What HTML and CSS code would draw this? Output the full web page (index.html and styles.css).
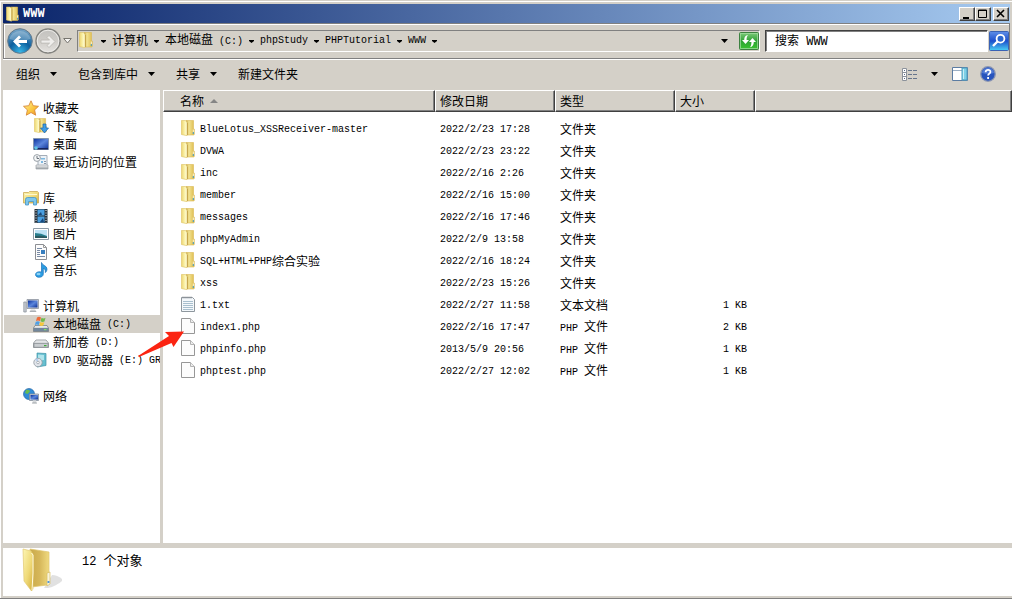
FILE: index.html
```html
<!DOCTYPE html>
<html lang="zh-CN">
<head>
<meta charset="utf-8">
<title>WWW</title>
<link rel="stylesheet" href="styles.css">
</head>
<body>
<svg class="sprite" aria-hidden="true">
  <defs>
    <linearGradient id="gold" x1="0" x2="1" y1="0" y2="1"><stop offset="0" stop-color="#fdf6b4"/><stop offset=".55" stop-color="#efd977"/><stop offset="1" stop-color="#d3ad3c"/></linearGradient>
    <linearGradient id="goldFront" x1="0" x2="1"><stop offset="0" stop-color="#ecd470"/><stop offset=".6" stop-color="#fbf3ad"/><stop offset="1" stop-color="#fffde2"/></linearGradient>
    <linearGradient id="goldBack" x1="0" x2="1"><stop offset="0" stop-color="#bd9c3c"/><stop offset=".35" stop-color="#f3e391"/><stop offset="1" stop-color="#dcba4c"/></linearGradient>
    <linearGradient id="goldDark" x1="0" x2="1"><stop offset="0" stop-color="#c9a94a"/><stop offset=".5" stop-color="#d6b75a"/><stop offset="1" stop-color="#f0da80"/></linearGradient>
    <linearGradient id="screen" x1="0" x2="1" y1="0" y2="1"><stop offset="0" stop-color="#0a2f9a"/><stop offset=".5" stop-color="#5b86dc"/><stop offset="1" stop-color="#0c2f94"/></linearGradient>
    <linearGradient id="steel" x1="0" x2="0" y1="0" y2="1"><stop offset="0" stop-color="#f5f6f7"/><stop offset="1" stop-color="#9ba1a6"/></linearGradient>
    <linearGradient id="star" x1="0" x2="1" y1="0" y2="1"><stop offset="0" stop-color="#fff6a0"/><stop offset=".6" stop-color="#fbc43c"/><stop offset="1" stop-color="#e8862a"/></linearGradient>
    <linearGradient id="green" x1="0" x2="0" y1="0" y2="1"><stop offset="0" stop-color="#7fca7c"/><stop offset=".5" stop-color="#2ea234"/><stop offset="1" stop-color="#39c52f"/></linearGradient>
    <linearGradient id="searchBlue" x1="0" x2="0" y1="0" y2="1"><stop offset="0" stop-color="#5f8fe8"/><stop offset=".5" stop-color="#1d50cc"/><stop offset="1" stop-color="#49d0f5"/></linearGradient>
    <radialGradient id="backBlue" cx=".5" cy=".95" r=".9"><stop offset="0" stop-color="#39b8e8"/><stop offset=".5" stop-color="#0b5f9e"/><stop offset="1" stop-color="#6fa0c4"/></radialGradient>
    <linearGradient id="fwdGrey" x1="0" x2="0" y1="0" y2="1"><stop offset="0" stop-color="#c2c1be"/><stop offset=".5" stop-color="#cfcdc9"/><stop offset="1" stop-color="#e4e2df"/></linearGradient>
  </defs>
  <symbol id="folder" viewBox="0 0 14 16">
    <path d="M5 .5h7.500v8.500h.8v5.500l-.8.500H5z" fill="url(#goldBack)" stroke="#dcb952" stroke-width=".6"/>
    <path d="M.4.5H4.500L6 2.500V15.700L.4 14.500z" fill="url(#goldFront)" stroke="#dec362" stroke-width=".6"/>
    <path d="M6 3h.8v12H6z" fill="#c2a044"/>
    <path d="M11.800 9.500h1v3h-1z" fill="#fbf5d6"/><path d="M11.800 12h1v2h-1z" fill="#3b9ac8"/>
  </symbol>
  <symbol id="file" viewBox="0 0 14 16">
    <path d="M.5.500h9l4 4v11H.5z" fill="#fcfcfc" stroke="#979797"/>
    <path d="M9.500.500v4h4" fill="#ededed" stroke="#b4b4b4"/>
  </symbol>
  <symbol id="textfile" viewBox="0 0 14 16">
    <path d="M.5 1.500h11l2 2v12H.5z" fill="#f4f8fb" stroke="#8e979e"/>
    <path d="M2 .5v2M4 .5v2M6 .5v2M8 .5v2M10 .5v2" stroke="#8a8f94" stroke-width=".9"/>
    <path d="M2 5.500h10M2 7.500h10M2 9.500h10M2 11.500h10M2 13.500h10" stroke="#9fb8c8" stroke-width=".9"/>
  </symbol>
  <symbol id="caret" viewBox="0 0 7 4"><path d="M0 0h7L3.500 4z"/></symbol>
  <symbol id="crumb" viewBox="0 0 5 3"><path d="M0 0h5v1L2.500 3 0 1z"/></symbol>
</svg>

<div class="window">
  <header class="titlebar">
    <svg class="title-icon"><use href="#folder"/></svg>
    <h1 class="title">WWW</h1>
    <div class="controls">
      <button class="control" aria-label="最小化"><svg width="10" height="10"><path d="M1 8h6v2H1z"/></svg></button>
      <button class="control" aria-label="最大化"><svg width="10" height="10"><path d="M.5 1h8v7.500h-8zM0 1.500h9" fill="none" stroke="#000"/></svg></button>
      <button class="control control-close" aria-label="关闭"><svg width="10" height="10"><path d="M1 1l7 7M8 1L1 8" stroke="#000" stroke-width="1.600"/></svg></button>
    </div>
  </header>

  <div class="navbar">
    <div class="history">
      <button class="nav-button" aria-label="后退"><svg viewBox="0 0 26 26"><circle cx="13" cy="13" r="12.300" fill="url(#backBlue)" stroke="#63788a"/><path d="M2.500 11a10.700 10 0 0 1 21 0Q13 15 2.500 11z" fill="#fff" opacity=".25"/><path d="M6 13.500l6-6 2 2-2.600 2.600H20v3h-8.600l2.600 2.400-2 2z" fill="#fff"/></svg></button>
      <button class="nav-button" aria-label="前进"><svg viewBox="0 0 26 26"><circle cx="13" cy="13" r="12" fill="url(#fwdGrey)" stroke="#83837f" stroke-width="1.500"/><circle cx="13" cy="13" r="10.800" fill="none" stroke="#ecebe8"/><path d="M20 13.500l-6-6-2 2 2.600 2.600H6v3h8.600L12 17.500l2 2z" fill="#efeeec" stroke="#b5b3ae" stroke-width=".7"/></svg></button>
      <button class="recent" aria-label="最近浏览的位置"><svg width="9" height="6"><path d="M.7.500h7.600L4.500 5z" fill="#f6f5f3" stroke="#77756f"/></svg></button>
    </div>
    <nav class="address" aria-label="地址">
      <svg class="address-icon"><use href="#folder"/></svg>
      <svg class="crumb-caret"><use href="#crumb"/></svg>
      <a class="crumb" href="#">计算机</a><svg class="crumb-caret"><use href="#crumb"/></svg>
      <a class="crumb" href="#">本地磁盘<span class="latin"> (C:)</span></a><svg class="crumb-caret"><use href="#crumb"/></svg>
      <a class="crumb latin" href="#">phpStudy</a><svg class="crumb-caret"><use href="#crumb"/></svg>
      <a class="crumb latin" href="#">PHPTutorial</a><svg class="crumb-caret"><use href="#crumb"/></svg>
      <a class="crumb latin" href="#">WWW</a><svg class="crumb-caret"><use href="#crumb"/></svg>
      <button class="address-drop" aria-label="以前的位置"><svg class="caret"><use href="#caret"/></svg></button>
      <button class="refresh" aria-label="刷新"><svg viewBox="0 0 20 18"><rect x=".5" y=".5" width="19" height="17" rx="1" fill="url(#green)" stroke="#3d8141"/><rect x="1.500" y="1.500" width="17" height="15" fill="none" stroke="#a7dfa5" opacity=".7"/><path d="M3 8h2.200c0-3 1.300-4.500 3.800-5-1 1.200-1.400 2.500-1.400 5H10l-3.500 4zM17 10h-2.200c0 3-1.300 4.800-3.800 5.300 1-1.200 1.400-2.800 1.400-5.300H10l3.500-4z" fill="#fff"/></svg></button>
    </nav>
    <form class="search">
      <input class="search-box" type="text" placeholder="搜索 WWW" aria-label="搜索 WWW">
      <button class="search-button" type="button" aria-label="搜索"><svg viewBox="0 0 20 20"><rect x=".5" y=".5" width="19" height="19" rx="1" fill="url(#searchBlue)" stroke="#3a62b4"/><circle cx="11.500" cy="7.700" r="3.900" fill="#2c67cf" stroke="#fff" stroke-width="1.800"/><path d="M8.500 10.500L4 15" stroke="#fff" stroke-width="2.400"/></svg></button>
    </form>
  </div>

  <div class="toolbar">
    <button class="tool">组织<svg class="caret"><use href="#caret"/></svg></button>
    <button class="tool">包含到库中<svg class="caret"><use href="#caret"/></svg></button>
    <button class="tool">共享<svg class="caret"><use href="#caret"/></svg></button>
    <button class="tool">新建文件夹</button>
    <div class="views">
      <button class="view" aria-label="更改您的视图"><svg width="15" height="13"><path d="M.5.500h4v12h-4zM.5 4.500h4M.5 8.500h4" fill="#fff" stroke="#8c929b"/><path d="M2 2h1v1H2zM2 6h1v1H2zM2 10h1v1H2z" fill="#5b6b86"/><path d="M6 2.500h4M11 2.500h4M6 6.500h4M11 6.500h4M6 10.500h4M11 10.500h4" stroke="#66758c"/></svg></button>
      <button class="view" aria-label="更多选项"><svg class="caret"><use href="#caret"/></svg></button>
      <button class="view view-pane" aria-label="显示预览窗格"><svg width="16" height="14"><path d="M.5.500h15v13H.5z" fill="#fff" stroke="#5c7ca2"/><path d="M1 3.500h9" stroke="#9cafc4"/><path d="M10 1h5v12h-5z" fill="#7fd0e6" stroke="#4f9fc0"/><path d="M11.500 2v10" stroke="#c8eef6"/></svg></button>
      <button class="view view-help" aria-label="获取帮助"><svg width="16" height="16"><circle cx="8" cy="8" r="7.300" fill="#2854bd" stroke="#8c97b2" stroke-width="1.300"/><path d="M2 7a6 5 0 0 1 12 0Q8 9 2 7z" fill="#7aa0ec" opacity=".5"/><path d="M5.600 6.200C5.600 3 10.600 3.200 10.400 6c-.1 1.600-2.300 1.700-2.300 3.500M8.100 11v1.900" fill="none" stroke="#fff" stroke-width="1.800"/></svg></button>
    </div>
  </div>

  <main class="content">
    <nav class="sidebar" aria-label="导航窗格">
      <section class="group">
        <a class="node" href="#"><svg class="node-icon"><path d="M8 .8l2.200 4.900 5.300.6-3.900 3.600 1.100 5.300L8 12.500l-4.700 2.700 1.100-5.300L.5 6.300l5.300-.6z" fill="url(#star)" stroke="#d98a3a" stroke-width=".9"/></svg>收藏夹</a>
        <a class="node child" href="#"><svg class="node-icon"><use href="#folder" x="1" width="13" height="15"/><path d="M10 6h3v4h2.500L11.500 15 7.500 10H10z" fill="#3f9be4" stroke="#1964ad" stroke-width=".7"/></svg>下载</a>
        <a class="node child" href="#"><svg class="node-icon"><path d="M.5 2.500h15v11H.5z" fill="url(#screen)" stroke="#8496af"/><path d="M1 12h14v1.500H1z" fill="#14245c"/><circle cx="3" cy="12" r="1.800" fill="#5fc3e4"/></svg>桌面</a>
        <a class="node child" href="#"><svg class="node-icon"><path d="M5 1.500h9v11H5z" fill="#edf2f7" stroke="#a4adb8"/><path d="M8 4h4v1.500H8zM8 7h2v2H8z" fill="#7db8e0"/><path d="M11 7.500h2M11 9.500h2" stroke="#8d98a6"/><path d="M3 11h12v4H3z" fill="url(#steel)" stroke="#9ca1a6" stroke-width=".7"/><circle cx="4" cy="4" r="3.400" fill="#f5f7f8" stroke="#9aa1a8"/><path d="M4 2v2.500h2" fill="none" stroke="#68717a"/></svg>最近访问的位置</a>
      </section>
      <section class="group">
        <a class="node" href="#"><svg class="node-icon"><path d="M.5 2.500h5l1-1h8l1 1V13H.5z" fill="url(#gold)" stroke="#cca956" stroke-width=".8"/><path d="M2 4.500h12" stroke="#fff8cf"/><path d="M2.500 15V9.500q0-2 2-2h7q2 0 2 2V15h-3v-3.500h-5V15z" fill="#7cc6ec" stroke="#4796c7" stroke-width=".8"/></svg>库</a>
        <a class="node child" href="#"><svg class="node-icon"><path d="M1.500 1h13v14h-13z" fill="#27323c"/><path d="M4.500 1.500h7v6h-7zM4.500 8.500h7v6h-7z" fill="#4a9fe0"/><path d="M5 7l3-3 1 3zM7 14l3-4 1 4z" fill="#17487d"/><path d="M3 2v13M13 2v13" stroke="#f5f5f5" stroke-dasharray="1 1.500"/></svg>视频</a>
        <a class="node child" href="#"><svg class="node-icon"><path d="M.5 2.500h15v11H.5z" fill="#fff" stroke="#8f9ba6"/><path d="M2 4h12v8H2z" fill="#bde2f5"/><path d="M2 7q6 0 12 3v2H2z" fill="#287f8f"/><path d="M2 10q7-1 12 1v1H2z" fill="#2b5960"/></svg>图片</a>
        <a class="node child" href="#"><svg class="node-icon"><path d="M2.500.500h8l3 3v12h-11z" fill="#fcfcfc" stroke="#8c8f94"/><path d="M10.500.500v3h3" fill="none" stroke="#999"/><path d="M4 4.500h5M4 6.500h3M4 8.500h3M4 10.500h3M4 12.500h8" stroke="#798ba5"/><path d="M8 6h4v4H8z" fill="#387fc0"/></svg>文档</a>
        <a class="node child" href="#"><svg class="node-icon"><path d="M8.500.5c.6 3 5.500 3 5.500 6.500 0 1.600-.7 2.700-1.700 3.600.5-2.600-.7-3.800-2-4.200V12c0 2-1.800 3.300-4 3.300s-3.800-1-3.800-2.600S4 9.800 6.300 9.800c.8 0 1.500.1 2.200.4z" fill="#2b9de2" stroke="#1b70b8" stroke-width=".7"/><ellipse cx="5.500" cy="12" rx="2" ry="1.200" fill="#8bd2f5"/></svg>音乐</a>
      </section>
      <section class="group">
        <a class="node" href="#"><svg class="node-icon"><path d="M.8 4h2.400v10H.8z" fill="#c8cdd3" stroke="#858c95" stroke-width=".7"/><path d="M4 1.500h11.500v9H4z" fill="#c9ced6" stroke="#8d949f" stroke-width=".8"/><path d="M5 2.500h9.500v7H5z" fill="url(#screen)"/><path d="M8 11h4l1.500 3h-7z" fill="url(#steel)"/></svg>计算机</a>
        <a class="node child selected" href="#"><svg class="node-icon"><path d="M2 9.500h12l1.500 2.500v3.500H.5V12z" fill="url(#steel)" stroke="#6c747b" stroke-width=".7"/><path d="M.7 12h14.600v3H.7z" fill="#72869b"/><path d="M11 13h2.500v1.200H11z" fill="#7ee063"/><path d="M4 1.500Q6 0 8 1.500L7 5Q5 4 3 5z" fill="#ef6a38"/><path d="M8.500 1.800q2 1.200 4 0l-1 3.700q-2 1-4-.2z" fill="#72b94d"/><path d="M2.800 5.700q2-1 4 0L5.800 9q-2-1-4 0z" fill="#4d9ee4"/><path d="M7.300 6q2 1 4 .2l-1 3.300q-2 1-4-.2z" fill="#f5c83b"/></svg>本地磁盘<span class="latin"> (C:)</span></a>
        <a class="node child" href="#"><svg class="node-icon"><path d="M3 6h10l2.500 3v4.500H.5V9z" fill="url(#steel)" stroke="#888e93" stroke-width=".8"/><path d="M1 9.500h14v3.800H1z" fill="#c9cdd0" stroke="#868c91" stroke-width=".7"/><path d="M11 11h2.500v1.200H11z" fill="#3cad35"/></svg>新加卷<span class="latin"> (D:)</span></a>
        <a class="node child" href="#"><svg class="node-icon"><path d="M4 1l9 .5v12L4 15z" fill="#65bfd0" stroke="#3f92a8" stroke-width=".7"/><path d="M5 2.500l6 .5v5L5 9z" fill="#b0e4ec"/><circle cx="5" cy="10.500" r="4.200" fill="#e1e5eb" stroke="#91989f" stroke-width=".8"/><path d="M5 10.500L2 7.500a4 4 0 0 1 3-1z" fill="#b5ceee"/><circle cx="5" cy="10.500" r="1.300" fill="#fff" stroke="#9299a0" stroke-width=".7"/></svg><span class="latin">DVD </span>驱动器<span class="latin"> (E:) GR</span></a>
      </section>
      <section class="group">
        <a class="node" href="#"><svg class="node-icon"><circle cx="6" cy="6" r="5.500" fill="#2f8bd6" stroke="#2a69a8" stroke-width=".7"/><path d="M3 2q4-1 4 1.500L4.500 6 2 5zM6 7l3 1-2 3z" fill="#68bd51"/><path d="M6.500 6h9v6.500h-9z" fill="#cbd1da" stroke="#808b9b" stroke-width=".8"/><path d="M7.500 7H15v4.500H7.500z" fill="url(#screen)"/><path d="M10 12.500h3l1 3H9z" fill="url(#steel)"/></svg>网络</a>
      </section>
    </nav>

    <div class="files">
      <table class="listing">
        <colgroup><col class="col-name"><col class="col-date"><col class="col-type"><col class="col-size"><col></colgroup>
        <thead>
          <tr><th class="head-name">名称<svg class="sort" width="8" height="4"><path d="M0 4h8L4 0z" fill="#858585"/></svg></th><th>修改日期</th><th>类型</th><th>大小</th><th></th></tr>
        </thead>
        <tbody>
          <tr><td class="name"><svg class="file-icon"><use href="#folder"/></svg><span class="latin">BlueLotus_XSSReceiver-master</span></td><td class="latin">2022/2/23 17:28</td><td>文件夹</td><td></td><td></td></tr>
          <tr><td class="name"><svg class="file-icon"><use href="#folder"/></svg><span class="latin">DVWA</span></td><td class="latin">2022/2/23 23:22</td><td>文件夹</td><td></td><td></td></tr>
          <tr><td class="name"><svg class="file-icon"><use href="#folder"/></svg><span class="latin">inc</span></td><td class="latin">2022/2/16 2:26</td><td>文件夹</td><td></td><td></td></tr>
          <tr><td class="name"><svg class="file-icon"><use href="#folder"/></svg><span class="latin">member</span></td><td class="latin">2022/2/16 15:00</td><td>文件夹</td><td></td><td></td></tr>
          <tr><td class="name"><svg class="file-icon"><use href="#folder"/></svg><span class="latin">messages</span></td><td class="latin">2022/2/16 17:46</td><td>文件夹</td><td></td><td></td></tr>
          <tr><td class="name"><svg class="file-icon"><use href="#folder"/></svg><span class="latin">phpMyAdmin</span></td><td class="latin">2022/2/9 13:58</td><td>文件夹</td><td></td><td></td></tr>
          <tr><td class="name"><svg class="file-icon"><use href="#folder"/></svg><span class="latin">SQL+HTML+PHP</span>综合实验</td><td class="latin">2022/2/16 18:24</td><td>文件夹</td><td></td><td></td></tr>
          <tr><td class="name"><svg class="file-icon"><use href="#folder"/></svg><span class="latin">xss</span></td><td class="latin">2022/2/23 15:26</td><td>文件夹</td><td></td><td></td></tr>
          <tr><td class="name"><svg class="file-icon"><use href="#textfile"/></svg><span class="latin">1.txt</span></td><td class="latin">2022/2/27 11:58</td><td>文本文档</td><td class="size latin">1 KB</td><td></td></tr>
          <tr><td class="name"><svg class="file-icon"><use href="#file"/></svg><span class="latin">index1.php</span></td><td class="latin">2022/2/16 17:47</td><td><span class="latin">PHP </span>文件</td><td class="size latin">2 KB</td><td></td></tr>
          <tr><td class="name"><svg class="file-icon"><use href="#file"/></svg><span class="latin">phpinfo.php</span></td><td class="latin">2013/5/9 20:56</td><td><span class="latin">PHP </span>文件</td><td class="size latin">1 KB</td><td></td></tr>
          <tr><td class="name"><svg class="file-icon"><use href="#file"/></svg><span class="latin">phptest.php</span></td><td class="latin">2022/2/27 12:02</td><td><span class="latin">PHP </span>文件</td><td class="size latin">1 KB</td><td></td></tr>
        </tbody>
      </table>
    </div>
    <svg class="pointer" viewBox="0 0 46 26" aria-hidden="true"><path d="M46 .5L27 1l4 4L0 25l1 1 32.500-14 2 4z" fill="#fb2412"/></svg>
  </main>

  <footer class="details">
    <svg class="big-folder" viewBox="0 0 40 44">
      <path d="M22 40l8-13q6 0 11 5-6 6-15 8z" fill="#777" opacity=".22"/>
      <path d="M8 1l19 3v29l-2 4-15 2z" fill="url(#goldDark)" stroke="#e0c66e" stroke-width=".7"/>
      <path d="M1 1l8 2 2 4v34l-1.500 2L2 33z" fill="url(#gold)" stroke="#e2c970" stroke-width=".7"/>
      <path d="M9.500 5l1.500 2v18l-1 17" fill="none" stroke="#fffbe0"/>
      <path d="M25 25l3-1v12l-3 2z" fill="#f9f4db" stroke="#d7bd62" stroke-width=".7"/><path d="M25.500 33h2v2h-2z" fill="#5597d6"/>
    </svg>
    <p class="summary"><span class="count">12 </span>个对象</p>
  </footer>
</div>
</body>
</html>
```
FILE: styles.css
```css
:root {
  --face: #d4d0c8;
  --shadow: #808080;
  --dark: #404040;
}

* { box-sizing: border-box; }

body {
  margin: 0;
  background: var(--face);
  color: #000;
  font: 12px/18px "Noto Sans CJK SC", sans-serif;
}

.sprite { position: absolute; width: 0; height: 0; }
svg { display: block; flex: none; }
a { color: inherit; text-decoration: none; }

button {
  display: flex;
  align-items: center;
  justify-content: center;
  padding: 0;
  border: 0;
  background: none;
  color: inherit;
  font: inherit;
}

.latin {
  font-family: "Liberation Mono", monospace;
  font-size: 10px;
  white-space: pre;
}

.caret { width: 7px; height: 4px; }

.window {
  display: flex;
  flex-direction: column;
  min-height: 100vh;
  padding: 2px 0 0 1px;
  border-top: 1px solid var(--face);
  border-bottom: 1px solid var(--shadow);
  box-shadow: inset 1px 1px #fff;
}

.titlebar {
  display: flex;
  align-items: center;
  height: 19px;
  margin: 1px 2px 0;
  padding: 0 1px 0 3px;
  background: linear-gradient(to right, #0a246a, #a6caf0);
}

.title-icon { width: 13px; height: 16px; }

.title {
  flex: 1;
  margin: 0 0 0 4px;
  color: #fff;
  font: bold 12px/18px "Liberation Mono", monospace;
}

.controls { display: flex; }

.control {
  width: 16px;
  height: 14px;
  border: 1px solid;
  border-color: #fff var(--dark) var(--dark) #fff;
  background: var(--face);
  box-shadow: inset -1px -1px var(--shadow);
}

.control-close { margin-left: 2px; }

.navbar {
  display: flex;
  align-items: center;
  height: 36px;
  margin: 0 2px;
  border: 1px solid var(--shadow);
  box-shadow: inset 1px 1px #fff, 0 1px #fff;
}

.history {
  display: flex;
  align-items: center;
  width: 73px;
  padding-left: 3px;
}

.nav-button { width: 26px; height: 26px; margin-right: 2px; }
.nav-button svg { width: 26px; height: 26px; }

.address {
  display: flex;
  flex: 1;
  align-items: center;
  height: 22px;
  border: 1px solid;
  border-color: var(--shadow) #fff #fff var(--shadow);
}

.address-icon { width: 14px; height: 16px; margin: 0 2px 2px 1px; }
.crumb { padding-bottom: 2px; white-space: pre; }
.crumb.latin { padding-bottom: 0; }
.crumb-caret { width: 17px; height: 3px; }
.address-drop { width: 14px; height: 18px; margin-left: auto; }
.refresh { margin-left: 8px; }
.refresh svg { width: 20px; height: 18px; }

.search {
  display: flex;
  align-items: center;
  width: 244px;
  gap: 1px;
  margin-left: 5px;
}

.search-box {
  flex: 1;
  min-width: 0;
  height: 22px;
  padding: 2px 9px 0;
  border: 1px solid;
  border-color: var(--dark) #fff #fff var(--dark);
  background: #fff;
  box-shadow: inset 1px 1px var(--shadow);
  font: 12px "Liberation Mono", "Noto Sans CJK SC", monospace;
}

.search-box::placeholder { color: #000; opacity: 1; }
.search-button svg { width: 20px; height: 20px; }

.toolbar {
  display: flex;
  align-items: center;
  gap: 21px;
  height: 30px;
  margin-top: 1px;
  padding: 0 16px 2px 15px;
}

.tool { gap: 10px; }
.views { display: flex; align-items: center; margin-left: auto; }
.view { margin-left: 14px; }
.view-help { margin-left: 12px; }

.content {
  position: relative;
  display: flex;
  flex: 1;
  margin-left: 2px;
}

.sidebar {
  width: 157px;
  padding-top: 9px;
  overflow: hidden;
  background: #fff;
}

.group { margin-bottom: 18px; }

.node {
  display: flex;
  align-items: center;
  height: 18px;
  padding-left: 20px;
  white-space: nowrap;
}

.child { padding-left: 30px; }
.selected { margin-left: 1px; padding-left: 29px; background: var(--face); }
.node-icon { width: 16px; height: 16px; margin-right: 4px; }

.node .latin,
.name .latin,
.listing td.latin { padding-top: 2px; }

.files {
  flex: 1;
  margin-left: 3px;
  background: #fff;
}

.listing {
  width: 100%;
  border-collapse: separate;
  border-spacing: 0;
  table-layout: fixed;
}

.col-name { width: 272px; }
.col-date, .col-type { width: 120px; }
.col-size { width: 80px; }

.listing th {
  height: 22px;
  padding: 0 0 0 4px;
  border: 1px solid;
  border-color: #fff var(--dark) var(--dark) #fff;
  background: var(--face);
  box-shadow: inset -1px -1px var(--shadow);
  font-weight: normal;
  line-height: 18px;
  text-align: left;
}

.listing .head-name { padding-left: 16px; }
.sort { display: inline-block; margin-left: 6px; vertical-align: 3px; }

.listing tbody::before {
  display: block;
  height: 6px;
  content: "";
}

.listing td {
  height: 22px;
  padding: 0 0 0 5px;
  line-height: 18px;
}

.listing .name {
  display: flex;
  align-items: center;
  padding-left: 18px;
}

.listing .size { padding-right: 8px; text-align: right; }
.file-icon { width: 14px; height: 16px; margin: 0 5px 2px 0; }

.pointer {
  position: absolute;
  top: 241px;
  left: 135px;
  width: 46px;
  height: 26px;
}

.details {
  display: flex;
  min-height: 48px;
  margin: 5px 0 2px 2px;
  padding-left: 19px;
  background: #fff;
}

.big-folder { width: 40px; height: 44px; }

.summary {
  margin: 3px 0 0 20px;
  font-size: 13px;
}

.count {
  font-family: "Liberation Mono", monospace;
  font-size: 12px;
  white-space: pre;
}
```
